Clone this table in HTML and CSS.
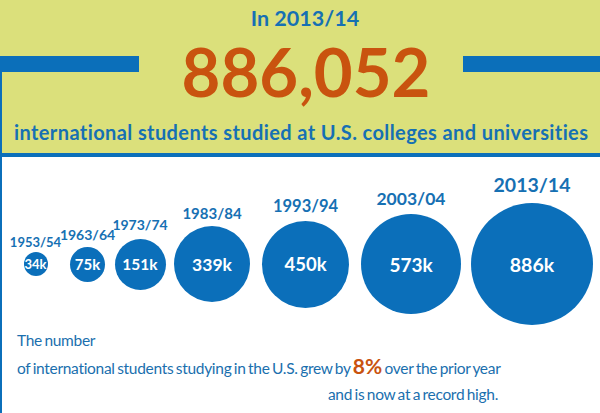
FILE: index.html
```html
<!DOCTYPE html>
<html lang="en">
<head>
<meta charset="utf-8">
<title>International students 2013/14</title>
<link rel="stylesheet" href="styles.css">
</head>
<body>
<div class="page">
  <header class="hero">
    <div class="hero-year">In 2013/14</div>
    <div class="hero-row">
      <span class="hero-bar hero-bar-left"></span>
      <span class="hero-number">886,052</span>
      <span class="hero-bar hero-bar-right"></span>
    </div>
    <div class="hero-sub">international students studied at U.S. colleges and universities</div>
  </header>

  <section class="chart">
    <div class="bubble" style="--d:24px;--fs:13px;--gap:3.5px;--vs:13px;--ml:12px;--w:47px">
      <span class="bubble-year">1953/54</span>
      <span class="bubble-circle">34k</span>
    </div>
    <div class="bubble" style="--d:35px;--fs:14px;--gap:4.5px;--vs:15px;--ml:2px;--w:53px">
      <span class="bubble-year">1963/64</span>
      <span class="bubble-circle">75k</span>
    </div>
    <div class="bubble" style="--d:51px;--fs:14px;--gap:6.5px;--vs:15.5px;--ml:0px;--w:52px">
      <span class="bubble-year">1973/74</span>
      <span class="bubble-circle">151k</span>
    </div>
    <div class="bubble" style="--d:76px;--fs:15px;--gap:5.5px;--vs:17.5px;--ml:8px;--w:76px">
      <span class="bubble-year">1983/84</span>
      <span class="bubble-circle">339k</span>
    </div>
    <div class="bubble" style="--d:87px;--fs:16.5px;--gap:6px;--vs:18.5px;--ml:12px;--w:87px">
      <span class="bubble-year">1993/94</span>
      <span class="bubble-circle">450k</span>
    </div>
    <div class="bubble" style="--d:100px;--fs:17.5px;--gap:7px;--vs:19px;--ml:12px;--w:100px">
      <span class="bubble-year">2003/04</span>
      <span class="bubble-circle">573k</span>
    </div>
    <div class="bubble" style="--d:122px;--fs:19.5px;--gap:8.5px;--vs:19.5px;--ml:10px;--w:122px">
      <span class="bubble-year">2013/14</span>
      <span class="bubble-circle">886k</span>
    </div>
  </section>

  <section class="note">
    <p class="note-text">The number<br>of international students studying in the U.S. grew by <strong class="note-pct">8%</strong> over the prior year</p>
    <p class="note-text note-end">and is now at a record high.</p>
  </section>
</div>
</body>
</html>
```

FILE: styles.css
```css
* { box-sizing: border-box; }

html, body {
  margin: 0;
  padding: 0;
  background: #ffffff;
}

body {
  font-family: "Lato", "Open Sans", sans-serif;
  color: #0d6fb8;
}

.page {
  position: relative;
  width: 600px;
  height: 413px;
  overflow: hidden;
  background: #ffffff;
}

/* vertical frame line running down the left edge */
.page::before {
  content: "";
  position: absolute;
  left: 0;
  top: 72px;
  bottom: 0;
  width: 2px;
  background: #0b6fba;
}

.hero {
  height: 157px;
  background: #dbe07b;
  border-bottom: 4px solid #0b6fba;
  padding-top: 6px;
}

.hero-year {
  text-align: center;
  font-size: 21.5px;
  line-height: 25px;
  font-weight: 700;
  color: #1670b3;
  padding-left: 10px;
}

.hero-row {
  display: flex;
  align-items: flex-start;
  margin-top: 8px;
  height: 66px;
}

.hero-bar {
  display: block;
  height: 16px;
  margin-top: 17px;
  background: #0b6fba;
}

.hero-bar-left { width: 139px; }
.hero-bar-right { width: 137px; }

.hero-number {
  flex: 1;
  text-align: center;
  padding-left: 10px;
  font-size: 67px;
  line-height: 65px;
  font-weight: 700;
  color: #c9530f;
}

.hero-sub {
  margin-top: 16px;
  padding-left: 14px;
  font-size: 20px;
  letter-spacing: 0.4px;
  line-height: 22px;
  font-weight: 700;
  color: #1670b3;
  white-space: nowrap;
}

.chart {
  display: flex;
  align-items: flex-end;
  height: 168px;
}

.bubble {
  display: flex;
  flex-direction: column;
  align-items: center;
  width: var(--w);
  margin-left: var(--ml);
  margin-bottom: calc((122px - var(--d)) / 2);
}

.bubble-year {
  font-size: var(--fs);
  line-height: 1;
  font-weight: 700;
  color: #1670b3;
  margin-bottom: var(--gap);
  white-space: nowrap;
}

.bubble-circle {
  display: flex;
  align-items: center;
  justify-content: center;
  width: var(--d);
  height: var(--d);
  border-radius: 50%;
  background: #0b6fba;
  color: #ffffff;
  font-size: var(--vs);
  font-weight: 700;
  white-space: nowrap;
}

.note {
  padding: 2px 0 0 17px;
  width: 498px;
}

.note-text {
  margin: 0;
  font-size: 15.5px;
  letter-spacing: -0.3px;
  word-spacing: -1.2px;
  line-height: 26px;
  color: #1a6fae;
  white-space: nowrap;
}

.note-end {
  text-align: right;
}

.note-pct {
  font-size: 21px;
  letter-spacing: 0;
  font-weight: 700;
  color: #c9530f;
}
```
